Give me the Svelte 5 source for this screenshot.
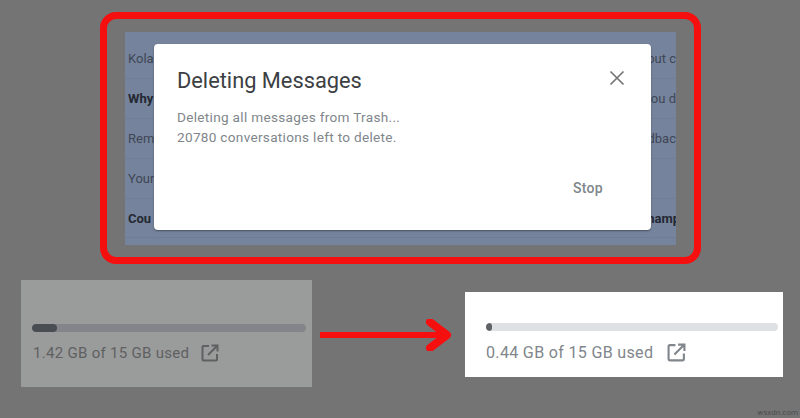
<script lang="ts">
  // rows behind the dialog: only the edges show past it
  const rows = [
    { left: 'Kolar', right: 'about c', bold: false },
    { left: 'Why', right: 'you d', bold: true, rightPlain: true },
    { left: 'Rem', right: 'feedbac', bold: false },
    { left: 'Your', right: '', bold: false },
    { left: 'Cou', right: 'champ', bold: true, clipped: true },
  ];
</script>

<div class="page">
  <div class="frame">
    <div class="panel">
      {#each rows as r}
        <div class="row" class:bold={r.bold}>
          <span>{r.left}</span>
          <span class:plain={r.rightPlain} class:clipped={r.clipped}>{r.right}</span>
        </div>
      {/each}

      <div class="dialog">
        <div class="head">
          <h2>Deleting Messages</h2>
          <svg class="close" viewBox="0 0 16 16" width="16" height="16">
            <path d="M1.5 1.5 14.5 14.5M14.5 1.5 1.5 14.5" fill="none" stroke="#757575" stroke-width="1.7" />
          </svg>
        </div>
        <p>Deleting all messages from Trash...<br />20780 conversations left to delete.</p>
        <div class="actions"><span class="stop">Stop</span></div>
      </div>
    </div>
  </div>

  <div class="bottom">
    <div class="storage before">
      <div class="track"><div class="fill" style="width:9%"></div></div>
      <div class="usage">
        <span>1.42 GB of 15 GB used</span>
        <svg viewBox="0 0 18 18" width="18" height="18">
          <path d="M8 2H2.5A1 1 0 0 0 1.5 3v12.5a1 1 0 0 0 1 1H15a1 1 0 0 0 1-1V10M10.5 1.5h6v6M16.5 1.5 7 11" fill="none" stroke="currentColor" stroke-width="2" />
        </svg>
      </div>
    </div>

    <svg class="arrow" viewBox="0 0 132 32" width="132" height="32">
      <path d="M0 16H126" stroke="#f50f0f" stroke-width="6" fill="none" />
      <path d="M110 3 127 16 110 29" stroke="#f50f0f" stroke-width="8" stroke-linecap="round" stroke-linejoin="round" fill="none" />
    </svg>

    <div class="storage after">
      <div class="track"><div class="fill" style="width:2%"></div></div>
      <div class="usage">
        <span>0.44 GB of 15 GB used</span>
        <svg viewBox="0 0 18 18" width="19" height="19">
          <path d="M8 2H2.5A1 1 0 0 0 1.5 3v12.5a1 1 0 0 0 1 1H15a1 1 0 0 0 1-1V10M10.5 1.5h6v6M16.5 1.5 7 11" fill="none" stroke="currentColor" stroke-width="2" />
        </svg>
      </div>
    </div>
  </div>

  <div class="mark">wsxdn.com</div>
</div>

<style>
  :global(body) { margin: 0; background: #747474; }
  .page {
    position: relative;
    width: 800px; height: 418px; padding-top: 12px; box-sizing: border-box;
    background: #747474; overflow: hidden;
    font-family: Roboto, "Liberation Sans", sans-serif;
  }

  .frame {
    width: 601px; height: 252px; margin-left: 100px; box-sizing: border-box;
    border: 7px solid #f50f0f; border-radius: 16px;
    padding: 13px 18px;
  }
  .panel {
    position: relative;
    height: 213px; background: #75849c; overflow: hidden;
    padding-top: 7px; box-sizing: border-box;
  }
  .row {
    display: flex; justify-content: space-between; align-items: center;
    height: 39.9px; box-sizing: border-box; padding-left: 3px;
    border-bottom: 1px solid #6f7e96;
    font-size: 13px; color: #3f4656; white-space: nowrap;
  }
  .row.bold { font-weight: 700; color: #232833; }
  .plain { font-weight: 400; color: #3f4656; }
  .clipped { margin-right: -4px; }

  .dialog {
    position: absolute; left: 29px; top: 12px;
    width: 497px; height: 186px; box-sizing: border-box;
    background: #fff; border-radius: 4px; padding: 24px 23px 0;
    box-shadow: 0 1px 2px rgba(40, 44, 52, 0.6);
  }
  .head { display: flex; justify-content: space-between; align-items: center; height: 24px; }
  h2 { margin: 0; font-size: 21.8px; font-weight: 400; color: #3c4043; }
  .close { margin-right: 3px; margin-top: -4px; }
  p { margin: 15px 0 0; font-size: 13.6px; line-height: 20px; color: #80868b; letter-spacing: 0.3px; }
  .actions { display: flex; justify-content: flex-end; margin-top: 33px; padding-right: 25px; }
  .stop { font-size: 14px; font-weight: 500; color: #80868b; letter-spacing: 0.3px; }

  .bottom { display: flex; align-items: center; margin: 16px 0 0 21px; }
  .storage { box-sizing: border-box; }
  .before { width: 291px; height: 107px; padding: 44px 6px 0 11px; background: #9a9b9b; color: #5f6062; }
  .after { width: 318px; height: 85px; margin: 2px 0 0 13px; padding: 31px 5px 0 21px; background: #fff; color: #80868b; }
  .arrow { margin-left: 8px; margin-top: 3px; flex: none; }

  .track { height: 8px; border-radius: 4px; overflow: hidden; }
  .fill { height: 100%; border-radius: 4px; }
  .before .track { background: #83858a; }
  .before .fill { background: #4a4d53; }
  .after .track { background: #dfe0e4; }
  .after .fill { background: #5f6368; }

  .usage { display: flex; align-items: center; gap: 12px; margin-top: 12px; padding-left: 1px; font-size: 15px; letter-spacing: 0.3px; }
  .after .usage { padding-left: 0; gap: 14px; font-size: 16.1px; }
  .usage svg { flex: none; }

  .mark { position: absolute; right: 2px; bottom: 1px; font-size: 8px; color: #4c4c4c; }
</style>
